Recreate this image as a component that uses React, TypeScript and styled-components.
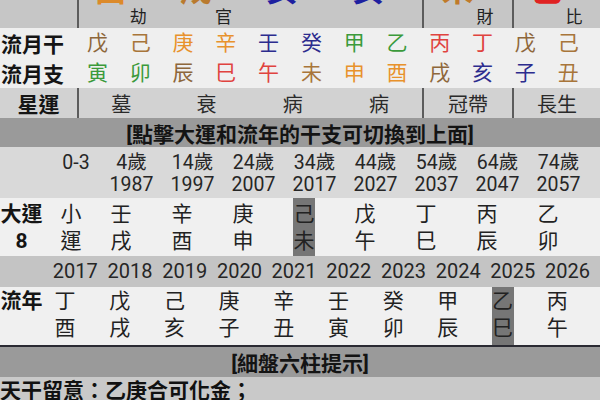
import React from "react";
import styled, { createGlobalStyle } from "styled-components";

const GlobalStyle = createGlobalStyle`
  html, body { margin: 0; padding: 0; background: #efefef; }
  body {
    width: 600px; height: 400px; overflow: hidden;
    font-family: Roboto, "Noto Sans CJK TC", sans-serif;
    color: #222;
  }
`;

const EARTH = "#8e673b";
const EARTH2 = "#a8753a";
const METAL = "#e8922c";
const WATER = "#2c2c8e";
const WOOD = "#3b9a3b";
const FIRE = "#e0433f";

const colorOf: Record<string, string> = {
  甲: WOOD, 乙: WOOD, 丙: FIRE, 丁: FIRE, 戊: EARTH, 己: EARTH2,
  庚: METAL, 辛: METAL, 壬: WATER, 癸: WATER,
  子: WATER, 亥: WATER, 寅: WOOD, 卯: WOOD, 巳: FIRE, 午: FIRE,
  申: METAL, 酉: METAL, 辰: EARTH, 戌: EARTH, 丑: EARTH2, 未: EARTH2,
};

const Page = styled.div`
  width: 600px;
  height: 400px;
  overflow: hidden;
  display: flex;
  flex-direction: column;
  background: #efefef;
`;

/* ---------- pillar rows (top + 星運) ---------- */
const PillarRow = styled.div<{ $bg: string; $h: number }>`
  flex: none;
  display: grid;
  grid-template-columns: 77px repeat(4, 86.25px) 90px 1fr;
  height: ${(p) => p.$h}px;
  background: ${(p) => p.$bg};
  overflow: hidden;
`;

const PillarCell = styled.div<{ $divider?: boolean; $top?: boolean }>`
  display: flex;
  justify-content: center;
  align-items: ${(p) => (p.$top ? "flex-start" : "center")};
  gap: 3px;
  box-sizing: border-box;
  border-left: ${(p) => (p.$divider ? "2px solid #5c5c5c" : "none")};
  font-size: 20px;
  color: #2a2a2a;
`;

const BigGlyph = styled.span<{ $color: string }>`
  font-size: 32px;
  line-height: 32px;
  font-weight: 700;
  margin-top: -26px;
  color: ${(p) => p.$color};
`;

const TenGod = styled.span`
  width: 18px;
  font-size: 17px;
  line-height: 17px;
  margin-top: 9px;
  color: #222;
`;

const BoldLabel = styled.div`
  font-size: 21px;
  font-weight: 700;
  color: #151515;
  white-space: nowrap;
`;

/* ---------- 流月 rows ---------- */
const MonthRow = styled.div`
  flex: none;
  display: grid;
  grid-template-columns: 76px repeat(12, 42.8px);
  height: 30px;
  align-items: center;
  background: #efefef;
`;

const MonthLabel = styled(BoldLabel)`
  padding-left: 1px;
`;

const MonthGlyph = styled.div<{ $color: string }>`
  text-align: center;
  font-size: 21px;
  line-height: 30px;
  color: ${(p) => p.$color};
`;

/* ---------- section bars ---------- */
const SectionBar = styled.div<{ $h: number }>`
  flex: none;
  height: ${(p) => p.$h}px;
  background: #9a9a9a;
  display: flex;
  align-items: center;
  justify-content: center;
  font-size: 21px;
  font-weight: 700;
  color: #141414;
  white-space: nowrap;
`;

/* ---------- 大運 rows ---------- */
const DecadeRow = styled.div<{ $bg: string; $h: number; $pad: number }>`
  flex: none;
  display: grid;
  grid-template-columns: 51px 50px repeat(8, 61px);
  height: ${(p) => p.$h}px;
  background: ${(p) => p.$bg};
  box-sizing: border-box;
  padding-top: ${(p) => p.$pad}px;
`;

const AgeCell = styled.div`
  text-align: center;
  font-size: 19.5px;
  line-height: 22px;
  color: #262626;
  white-space: nowrap;
`;

const StackLabel = styled(BoldLabel)<{ $pt: number }>`
  width: 43px;
  text-align: center;
  line-height: 27px;
  padding-top: ${(p) => p.$pt}px;
`;

const GanZhi = styled.div<{ $active?: boolean; $ml: number; $pt: number }>`
  justify-self: start;
  width: 22px;
  margin-left: ${(p) => p.$ml}px;
  box-sizing: border-box;
  padding-top: ${(p) => p.$pt}px;
  background: ${(p) => (p.$active ? "#767676" : "transparent")};
  text-align: center;
  font-size: 21px;
  line-height: 27px;
  color: #222;
`;

/* ---------- 流年 rows ---------- */
const YearRow = styled.div<{ $bg: string; $h: number; $line?: boolean }>`
  flex: none;
  display: grid;
  grid-template-columns: 48px repeat(10, 54.7px);
  height: ${(p) => p.$h}px;
  background: ${(p) => p.$bg};
  border-bottom: ${(p) => (p.$line ? "2px solid #2a2a32" : "none")};
`;

const YearCell = styled.div`
  text-align: center;
  font-size: 20px;
  line-height: 31px;
  color: #262626;
`;

const TipRow = styled.div`
  flex: 1;
  background: #c9c9c9;
  font-size: 21px;
  line-height: 28px;
  font-weight: 700;
  color: #111;
  white-space: nowrap;
`;

const topCells = [
  { g: "酉", c: "#dc8a2a", t: "劫" },
  { g: "戌", c: "#b97a2e", t: "官" },
  { g: "亥", c: "#1e20a0", t: "" },
  { g: "亥", c: "#1e20a0", t: "" },
  { g: "未", c: "#c07a2a", t: "財" },
  { g: "巳", c: "#e02222", t: "比" },
];

const monthStems = "戊己庚辛壬癸甲乙丙丁戊己".split("");
const monthBranches = "寅卯辰巳午未申酉戌亥子丑".split("");
const stars = ["墓", "衰", "病", "病", "冠帶", "長生"];

const ages = [
  ["0-3", ""], ["4歲", "1987"], ["14歲", "1997"], ["24歲", "2007"], ["34歲", "2017"],
  ["44歲", "2027"], ["54歲", "2037"], ["64歲", "2047"], ["74歲", "2057"],
];
const decades = [
  ["小", "運"], ["壬", "戌"], ["辛", "酉"], ["庚", "申"], ["己", "未"],
  ["戊", "午"], ["丁", "巳"], ["丙", "辰"], ["乙", "卯"],
];
const years = ["2017", "2018", "2019", "2020", "2021", "2022", "2023", "2024", "2025", "2026"];
const yearGz = [
  ["丁", "酉"], ["戊", "戌"], ["己", "亥"], ["庚", "子"], ["辛", "丑"],
  ["壬", "寅"], ["癸", "卯"], ["甲", "辰"], ["乙", "巳"], ["丙", "午"],
];

export default function App() {
  return (
    <>
      <GlobalStyle />
      <Page>
        <PillarRow $bg="#c6c6c6" $h={28}>
          <PillarCell />
          {topCells.map((c, i) => (
            <PillarCell key={i} $top $divider={i === 0 || i === 4 || i === 5}>
              <BigGlyph $color={c.c}>{c.g}</BigGlyph>
              <TenGod>{c.t}</TenGod>
            </PillarCell>
          ))}
        </PillarRow>

        <MonthRow>
          <MonthLabel>流月干</MonthLabel>
          {monthStems.map((s, i) => (
            <MonthGlyph key={i} $color={colorOf[s]}>{s}</MonthGlyph>
          ))}
        </MonthRow>
        <MonthRow>
          <MonthLabel>流月支</MonthLabel>
          {monthBranches.map((s, i) => (
            <MonthGlyph key={i} $color={colorOf[s]}>{s}</MonthGlyph>
          ))}
        </MonthRow>

        <PillarRow $bg="#d2d2d2" $h={30}>
          <PillarCell>
            <BoldLabel>星運</BoldLabel>
          </PillarCell>
          {stars.map((s, i) => (
            <PillarCell key={i} $divider={i === 0 || i === 4 || i === 5}>
              {s}
            </PillarCell>
          ))}
        </PillarRow>

        <SectionBar $h={29}>[點擊大運和流年的干支可切換到上面]</SectionBar>

        <DecadeRow $bg="#d9d9d9" $h={51} $pad={5}>
          <div />
          {ages.map((a, i) => (
            <AgeCell key={i}>
              {a[0]}
              <br />
              {a[1]}
            </AgeCell>
          ))}
        </DecadeRow>

        <DecadeRow $bg="#f0f0f0" $h={58} $pad={0}>
          <StackLabel $pt={3}>
            大運
            <br />8
          </StackLabel>
          {decades.map((d, i) => (
            <GanZhi key={i} $ml={9} $pt={3} $active={i === 4}>
              {d[0]}
              <br />
              {d[1]}
            </GanZhi>
          ))}
        </DecadeRow>

        <YearRow $bg="#c4c4c4" $h={31}>
          <div />
          {years.map((y) => (
            <YearCell key={y}>{y}</YearCell>
          ))}
        </YearRow>

        <YearRow $bg="#f0f0f0" $h={58} $line>
          <StackLabel $pt={1}>流年</StackLabel>
          {yearGz.map((d, i) => (
            <GanZhi key={i} $ml={6} $pt={1} $active={i === 8}>
              {d[0]}
              <br />
              {d[1]}
            </GanZhi>
          ))}
        </YearRow>

        <SectionBar $h={30}>[細盤六柱提示]</SectionBar>

        <TipRow>天干留意：乙庚合可化金；</TipRow>
      </Page>
    </>
  );
}
